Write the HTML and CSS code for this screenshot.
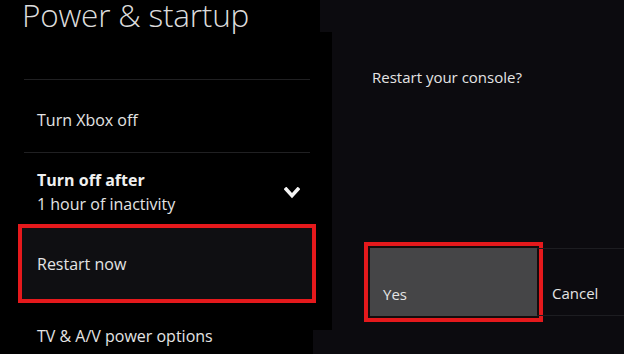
FILE: index.html
```html
<!DOCTYPE html>
<html lang="en">
<head>
<meta charset="utf-8">
<title>Power &amp; startup</title>
<link rel="stylesheet" href="styles.css">
</head>
<body>
<div class="screen">
  <section class="menu">
    <h1 class="title">Power &amp; startup</h1>
    <div class="divider"></div>
    <div class="item item-single">Turn Xbox off</div>
    <div class="divider"></div>
    <div class="item item-double">
      <div class="item-text">
        <div class="item-label">Turn off after</div>
        <div class="item-sub">1 hour of inactivity</div>
      </div>
      <svg class="chevron" width="16" height="12" viewBox="0 0 16 12"><path d="M2.2 2.2 L8 8.6 L13.8 2.2" fill="none" stroke="#f4f4f4" stroke-width="3.6" stroke-linecap="square" stroke-linejoin="miter"/></svg>
    </div>
    <div class="item item-focus">Restart now</div>
    <div class="item item-last">TV &amp; A/V power options</div>
  </section>
  <section class="dialog">
    <p class="question">Restart your console?</p>
    <div class="actions">
      <div class="btn btn-yes">Yes</div>
      <div class="btn btn-cancel">Cancel</div>
    </div>
  </section>
</div>
</body>
</html>
```
FILE: styles.css
```css
html, body {
  margin: 0;
  padding: 0;
  background: #000;
}
body {
  width: 624px;
  height: 354px;
  overflow: hidden;
  font-family: "Open Sans", "Noto Sans", sans-serif;
  color: #e4e4e4;
}
.screen {
  display: flex;
  width: 624px;
  height: 354px;
}
.menu {
  width: 308px;
  flex: none;
  padding-left: 24px;
  display: flex;
  flex-direction: column;
}
.title {
  margin: 0 0 0 -2px;
  height: 79px;
  font-size: 31.5px;
  font-weight: 300;
  line-height: 30px;
  color: #dcdcdc;
  letter-spacing: -0.2px;
  white-space: nowrap;
}
.divider {
  width: 286px;
  height: 1px;
  flex: none;
  background: #202022;
}
.item {
  box-sizing: border-box;
  width: 286px;
  flex: none;
  font-size: 16px;
  line-height: 22px;
  padding-left: 13px;
}
.item-single {
  height: 72px;
  padding-top: 29px;
}
.item-double {
  height: 71px;
  display: flex;
  justify-content: space-between;
  align-items: flex-start;
  padding-top: 15px;
}
.item-label {
  font-weight: 700;
  line-height: 24px;
  color: #f0f0f0;
}
.item-sub {
  line-height: 24px;
}
.chevron {
  margin-right: 10px;
  margin-top: 19px;
}
.item-focus {
  margin-left: -6px;
  width: 298px;
  height: 79px;
  border: 4px solid #e5191c;
  background: #0f0f12;
  padding-left: 15px;
  padding-top: 25px;
}
.item-last {
  padding-top: 22px;
}
.dialog {
  flex: 1;
  position: relative;
  background: #0c0b0f;
  display: flex;
  flex-direction: column;
}
.dialog::before {
  content: "";
  position: absolute;
  left: -12px;
  top: 0;
  width: 12px;
  height: 32px;
  background: #0c0b0f;
}
.dialog::after {
  content: "";
  position: absolute;
  left: -19px;
  bottom: 0;
  width: 19px;
  height: 24px;
  background: #0c0b0f;
}
.question {
  margin: 66px 0 0 40px;
  font-size: 15px;
  line-height: 22px;
}
.actions {
  display: flex;
  margin-top: 160px;
  margin-left: 38px;
  height: 68px;
}
.btn {
  box-sizing: border-box;
  height: 68px;
  font-size: 15px;
  line-height: 22px;
  display: flex;
  align-items: flex-end;
  padding-bottom: 11px;
}
.btn-yes {
  width: 167px;
  flex: none;
  background: #454547;
  padding-left: 13px;
  box-shadow: 0 0 0 2px #150c0d, 0 0 0 6px #e5191c;
}
.btn-cancel {
  flex: 1;
  border-top: 1px solid #1d1d21;
  border-bottom: 1px solid #1d1d21;
  padding-left: 15px;
}
```
